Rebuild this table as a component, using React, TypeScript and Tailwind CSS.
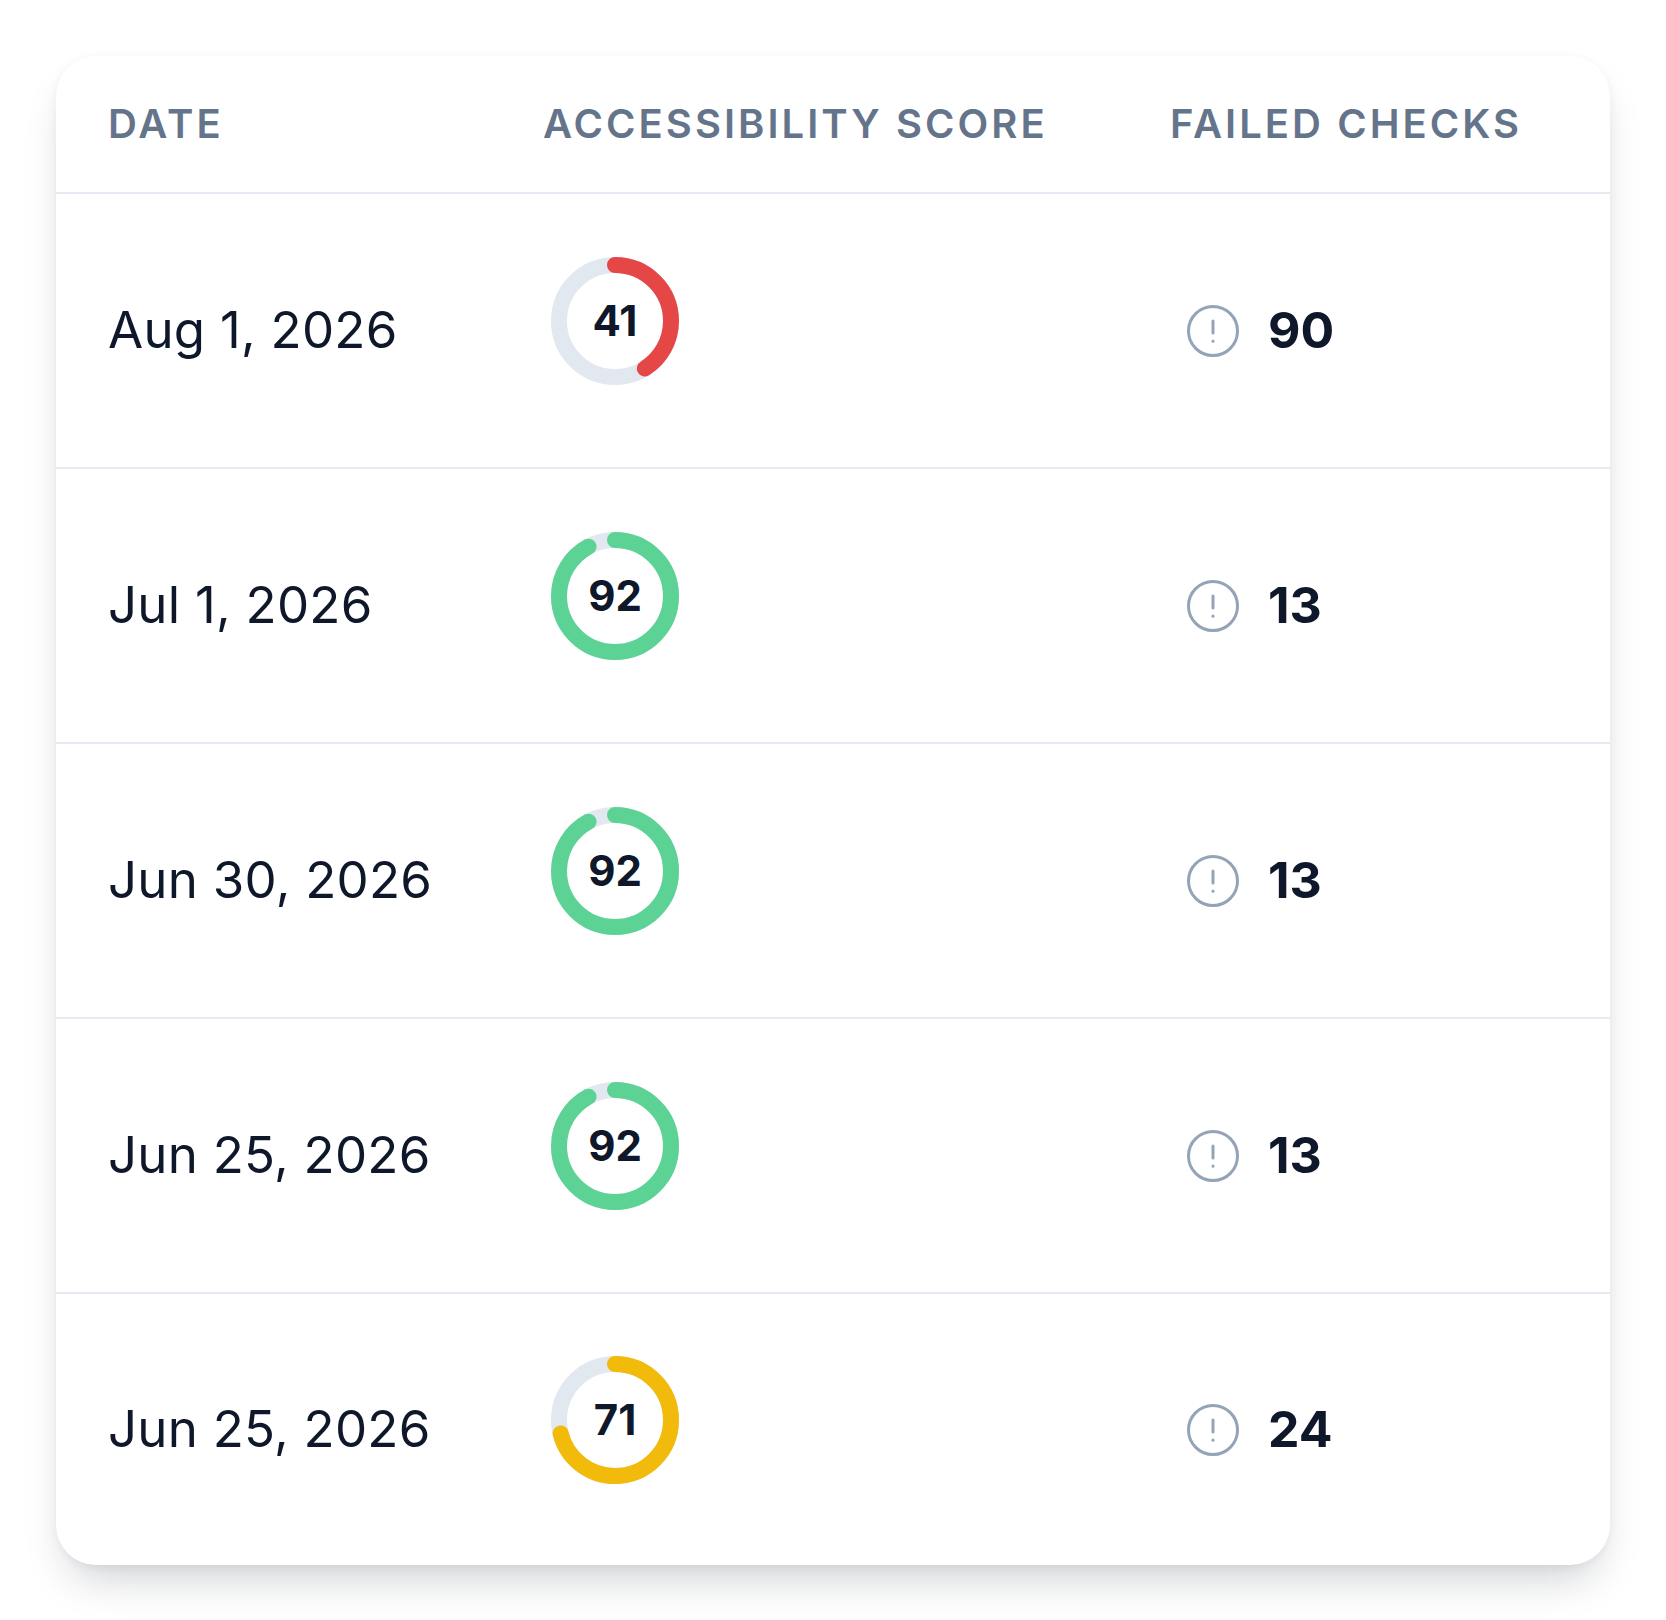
const rows = [
  { date: "Aug 1, 2026", score: 41, failed: 90 },
  { date: "Jul 1, 2026", score: 92, failed: 13 },
  { date: "Jun 30, 2026", score: 92, failed: 13 },
  { date: "Jun 25, 2026", score: 92, failed: 13 },
  { date: "Jun 25, 2026", score: 71, failed: 24 },
];

function scoreColor(score: number) {
  if (score >= 90) return "#5cd394";
  if (score >= 50) return "#f2bb0c";
  return "#e54646";
}

function ScoreRing({ score }: { score: number }) {
  const r = 56;
  const circ = 2 * Math.PI * r;
  return (
    <div className="relative w-[128px] h-[128px] ml-[8px] mb-5 shrink-0">
      <svg width="128" height="128" viewBox="0 0 128 128" className="-rotate-90">
        <circle cx="64" cy="64" r={r} fill="none" stroke="#e2e8f0" strokeWidth="16" />
        <circle
          cx="64"
          cy="64"
          r={r}
          fill="none"
          stroke={scoreColor(score)}
          strokeWidth="16"
          strokeLinecap="round"
          strokeDasharray={circ}
          strokeDashoffset={circ * (1 - score / 100)}
        />
      </svg>
      <span className="absolute inset-0 flex items-center justify-center text-[42px] font-bold text-[#0f172a]">
        {score}
      </span>
    </div>
  );
}

function AlertIcon() {
  return (
    <svg width="54" height="54" viewBox="0 0 54 54" fill="none" stroke="#94a3b8" strokeWidth="3" strokeLinecap="round">
      <circle cx="27" cy="27" r="24.5" />
      <line x1="27" y1="17" x2="27" y2="29" />
      <line x1="27" y1="37" x2="27" y2="37.2" />
    </svg>
  );
}

export default function App() {
  return (
    <div className="min-h-screen bg-white p-[56px] font-['Inter',sans-serif]">
      <div className="w-[1554px] rounded-[40px] bg-white overflow-hidden shadow-[0_2px_10px_rgba(15,23,42,0.05),0_24px_44px_-14px_rgba(15,23,42,0.22)]">
        {/* header */}
        <div className="grid grid-cols-[435px_627px_1fr] items-center h-[138px] pl-[52px] border-b-2 border-[#e6eaf2] text-[40px] font-semibold tracking-[0.076em] text-[#64748b] uppercase">
          <div>Date</div>
          <div>Accessibility Score</div>
          <div>Failed Checks</div>
        </div>

        {rows.map((row, i) => (
          <div
            key={i}
            className={`grid grid-cols-[435px_627px_1fr] items-center pl-[52px] ${
              i < rows.length - 1 ? "h-[275px] border-b-2 border-[#e6eaf2]" : "h-[271px]"
            }`}
          >
            <div className="text-[51px] tracking-[0.005em] text-[#0f172a]">{row.date}</div>
            <div className="flex items-center">
              <ScoreRing score={row.score} />
            </div>
            <div className="flex items-center gap-[28px] pl-[16px]">
              <AlertIcon />
              <span className="text-[50px] font-bold text-[#0f172a]">{row.failed}</span>
            </div>
          </div>
        ))}
      </div>
    </div>
  );
}
